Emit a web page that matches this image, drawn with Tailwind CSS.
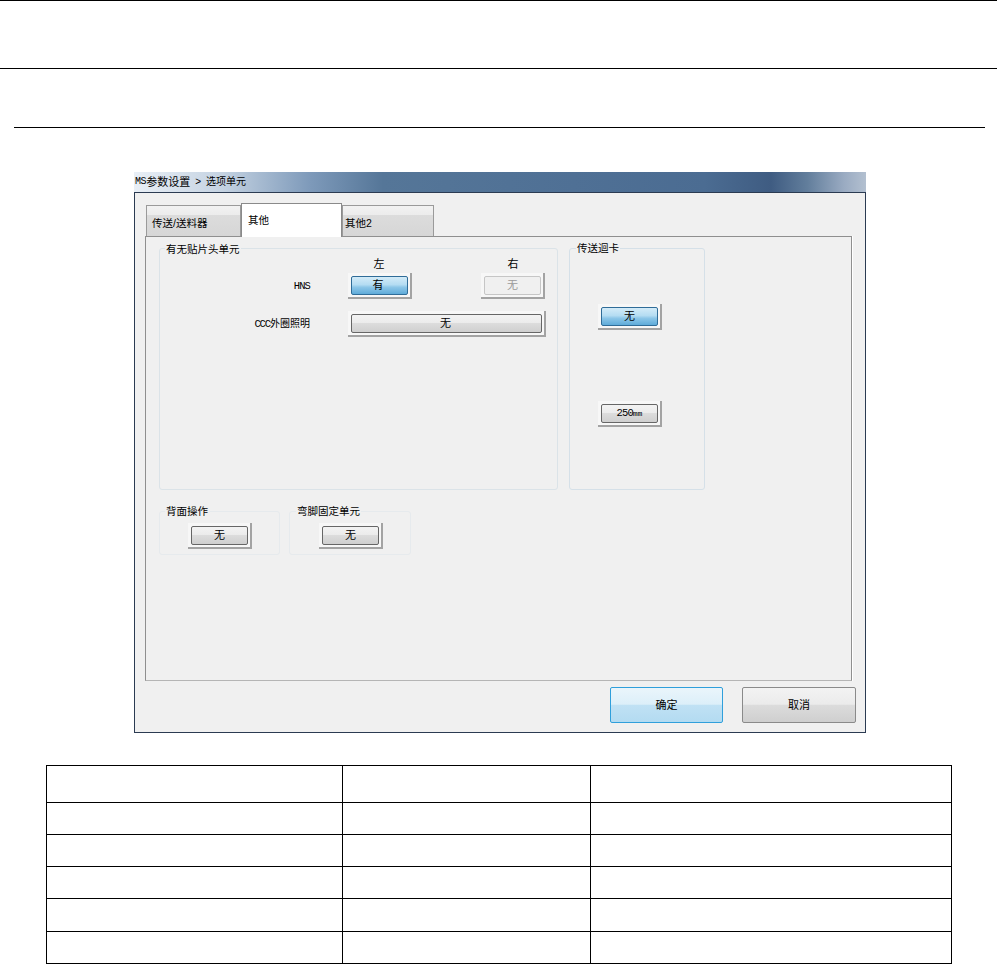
<!DOCTYPE html>
<html lang="zh-CN">
<head>
  <meta charset="UTF-8">
  <title>MS参数设置</title>
  <script src="https://cdn.jsdelivr.net/npm/@tailwindcss/browser@4"></script>
</head>
<body class="bg-white font-['Liberation_Sans','Noto_Sans_CJK_SC',sans-serif] text-[11px] leading-none text-black">
  <!-- Document rules -->
  <div class="h-px bg-black"></div>
  <div class="mt-[67px] h-px bg-black"></div>
  <div class="ml-[14px] mr-[12px] mt-[58px] h-px bg-black"></div>

  <!-- Dialog -->
  <div class="ml-[134px] mt-[44px] w-[732px]">
    <div class="flex h-[20px] items-center pl-px bg-[linear-gradient(90deg,#e9eff6_0%,#c5d3e2_12%,#7e9aba_24%,#557698_34%,#4f7095_60%,#4b6c92_78%,#3f5c82_87%,#627e9c_92%,#9aabc2_97%,#b3c0d0_100%)]">
      <span class="font-['Liberation_Mono',monospace] text-[10px] tracking-[-0.4px]">MS</span><span>参数设置</span><span class="ml-[5px] text-[10px]">&gt;</span><span class="ml-[5px] text-[10px]">选项单元</span>
    </div>
    <div class="h-[541px] border border-[#2b3b52] bg-[#f0f0f0]">
      <!-- Tabs -->
      <div class="ml-[11px] flex h-[43px] items-end pt-[10px] text-[10.5px]">
        <div class="h-[31px] w-[95px] border border-b-0 border-[#9a9a9a] bg-[linear-gradient(180deg,#f2f2f2_0%,#ececec_30%,#dcdcdc_31%,#d6d6d6_100%)] pl-[5px] pt-[12px]">传送/送料器</div>
        <div class="relative z-10 -mb-px h-[34px] w-[101px] border border-b-0 border-[#8a8a8a] bg-white pl-[6px] pt-[11px]">其他</div>
        <div class="h-[31px] w-[92px] border border-b-0 border-[#9a9a9a] bg-[linear-gradient(180deg,#f2f2f2_0%,#ececec_30%,#dcdcdc_31%,#d6d6d6_100%)] pl-[2px] pt-[12px]">其他2</div>
      </div>
      <!-- Tab panel -->
      <div class="ml-[10px] h-[445px] w-[707px] border border-[#8f8f8f] border-b-[#b5b5b5] pl-[13px] pt-[11px] shadow-[1px_0_0_#ffffff]">
        <div class="flex items-start gap-[11px]">
          <!-- 有无贴片头单元 -->
          <div class="relative h-[242px] w-[399px] rounded-[3px] border border-[#dbe3e8] pt-[6px]">
            <span class="absolute -top-[5px] left-[5px] bg-[#f0f0f0] px-px text-[10.5px]">有无贴片头单元</span>
            <div class="flex h-[18px] items-center">
              <span class="ml-[187px] w-[64px] text-center">左</span>
              <span class="ml-[70px] w-[64px] text-center">右</span>
            </div>
            <div class="flex items-center">
              <span class="w-[150px] text-right font-['Liberation_Mono',monospace] text-[10.5px] tracking-[-0.9px]">HNS</span>
              <div class="ml-[38px] h-[26px] w-[64px] border-b-2 border-r-2 border-[#a3a3a3] bg-[#f7f7f7] p-[3px] pb-[2px] pr-[2px]">
                <div class="flex h-full items-center justify-center rounded-[2px] border border-[#2f6c98] bg-[linear-gradient(180deg,#d3ebf8_0%,#b4dcf2_45%,#8cc6e8_60%,#5fabd9_100%)] pr-[3px]">有</div>
              </div>
              <div class="ml-[69px] h-[26px] w-[64px] border-b-2 border-r-2 border-[#a3a3a3] bg-[#f7f7f7] p-[3px] pb-[2px] pr-[2px]">
                <div class="flex h-full items-center justify-center rounded-[2px] border border-[#c6c6c6] bg-[#f0f0f0] text-[#9a9a9a]">无</div>
              </div>
            </div>
            <div class="mt-[12px] flex items-center">
              <span class="w-[150px] text-right text-[10px]"><span class="font-['Liberation_Mono',monospace] text-[10.5px] tracking-[-1.1px]">CCC</span>外圈照明</span>
              <div class="ml-[38px] h-[26px] w-[198px] border-b-2 border-r-2 border-[#a3a3a3] bg-[#f7f7f7] p-[3px] pb-[2px] pr-[2px]">
                <div class="flex h-full items-center justify-center rounded-[2px] border border-[#666] bg-[linear-gradient(180deg,#f3f3f3_0%,#ebebeb_48%,#dcdcdc_50%,#cfcfcf_100%)] pr-[2px]">无</div>
              </div>
            </div>
          </div>
          <!-- 传送迴卡 -->
          <div class="relative h-[242px] w-[136px] rounded-[3px] border border-[#d5e0e8] pl-[28px] pt-[55px]">
            <span class="absolute -top-[6px] left-[6px] bg-[#f0f0f0] px-px text-[10.5px]">传送迴卡</span>
            <div class="h-[26px] w-[64px] border-b-2 border-r-2 border-[#a3a3a3] bg-[#f7f7f7] p-[3px] pb-[2px] pr-[2px]">
              <div class="flex h-full items-center justify-center rounded-[2px] border border-[#2f6c98] bg-[linear-gradient(180deg,#d3ebf8_0%,#b4dcf2_45%,#8cc6e8_60%,#5fabd9_100%)]">无</div>
            </div>
            <div class="mt-[71px] h-[26px] w-[64px] border-b-2 border-r-2 border-[#a3a3a3] bg-[#f7f7f7] p-[3px] pb-[2px] pr-[2px]">
              <div class="flex h-full items-center justify-center rounded-[2px] border border-[#666] bg-[linear-gradient(180deg,#f3f3f3_0%,#ebebeb_48%,#dcdcdc_50%,#cfcfcf_100%)] font-['Liberation_Mono',monospace] text-[10.5px] tracking-[-0.9px]">250<span class="text-[8px] tracking-[0]">mm</span></div>
            </div>
          </div>
        </div>
        <div class="mt-[21px] flex items-start gap-[9px]">
          <div class="relative h-[44px] w-[121px] rounded-[3px] border border-[#e6eaed] pl-[28px] pt-[11px]">
            <span class="absolute -top-[6px] left-[5px] bg-[#f0f0f0] px-px text-[10.5px]">背面操作</span>
            <div class="h-[26px] w-[64px] border-b-2 border-r-2 border-[#a3a3a3] bg-[#f7f7f7] p-[3px] pb-[2px] pr-[2px]">
              <div class="flex h-full items-center justify-center rounded-[2px] border border-[#666] bg-[linear-gradient(180deg,#f3f3f3_0%,#ebebeb_48%,#dcdcdc_50%,#cfcfcf_100%)]">无</div>
            </div>
          </div>
          <div class="relative h-[44px] w-[122px] rounded-[3px] border border-[#e6eaed] pl-[29px] pt-[11px]">
            <span class="absolute -top-[6px] left-[6px] bg-[#f0f0f0] px-px text-[10.5px]">弯脚固定单元</span>
            <div class="h-[26px] w-[64px] border-b-2 border-r-2 border-[#a3a3a3] bg-[#f7f7f7] p-[3px] pb-[2px] pr-[2px]">
              <div class="flex h-full items-center justify-center rounded-[2px] border border-[#666] bg-[linear-gradient(180deg,#f3f3f3_0%,#ebebeb_48%,#dcdcdc_50%,#cfcfcf_100%)]">无</div>
            </div>
          </div>
        </div>
      </div>
      <!-- Footer -->
      <div class="ml-[475px] mt-[6px] flex gap-[19px]">
        <div class="flex h-[36px] w-[113px] items-center justify-center rounded-[2px] border border-[#2f9fdb] bg-[linear-gradient(180deg,#eaf5fb_0%,#dceff9_48%,#c0e1f4_50%,#b3dbf1_100%)]">确定</div>
        <div class="flex h-[36px] w-[114px] items-center justify-center rounded-[2px] border border-[#8a8a8a] bg-[linear-gradient(180deg,#f3f3f3_0%,#ebebeb_48%,#dcdcdc_50%,#cfcfcf_100%)]">取消</div>
      </div>
    </div>
  </div>

  <!-- Table -->
  <table class="ml-[46px] mt-[32px] w-[905px] table-fixed border-collapse">
    <colgroup><col class="w-[296px]"><col class="w-[248px]"><col class="w-[361px]"></colgroup>
    <tbody>
      <tr class="h-[37px]"><td class="border border-black"></td><td class="border border-black"></td><td class="border border-black"></td></tr>
      <tr class="h-[32px]"><td class="border border-black"></td><td class="border border-black"></td><td class="border border-black"></td></tr>
      <tr class="h-[32px]"><td class="border border-black"></td><td class="border border-black"></td><td class="border border-black"></td></tr>
      <tr class="h-[32px]"><td class="border border-black"></td><td class="border border-black"></td><td class="border border-black"></td></tr>
      <tr class="h-[33px]"><td class="border border-black"></td><td class="border border-black"></td><td class="border border-black"></td></tr>
      <tr class="h-[32px]"><td class="border border-black"></td><td class="border border-black"></td><td class="border border-black"></td></tr>
    </tbody>
  </table>
</body>
</html>
